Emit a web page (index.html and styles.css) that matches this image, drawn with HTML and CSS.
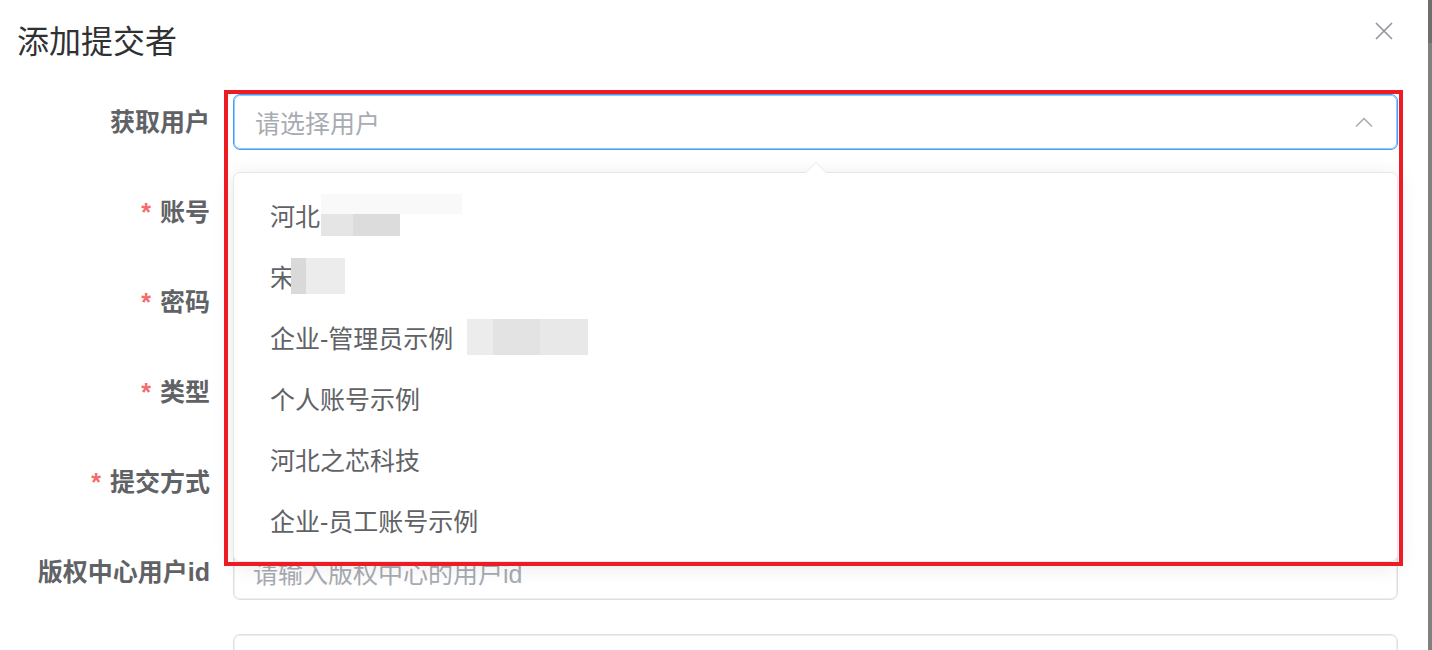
FILE: index.html
```html
<!DOCTYPE html>
<html>
<head>
  <title>添加提交者</title>
  <link rel="stylesheet" href="styles.css">
</head>
<body>
<div class="page">
  <div class="dialog">
    <div class="dialog-header">
      <span class="dialog-title">添加提交者</span>
      <svg class="close-icon" width="18" height="18" viewBox="0 0 18 18">
        <path d="M1 1 L17 17 M17 1 L1 17" stroke="#909399" stroke-width="1.6" fill="none"/>
      </svg>
    </div>

    <div class="form">
      <div class="form-row">
        <label class="form-label">获取用户</label>
        <div class="form-field">
          <div class="select is-focus">
            <span class="placeholder">请选择用户</span>
            <svg class="arrow-icon" width="18" height="10" viewBox="0 0 18 10">
              <path d="M1 9.5 L9 1.5 L17 9.5" stroke="#a8abb2" stroke-width="1.5" fill="none"/>
            </svg>
          </div>
        </div>
      </div>
      <div class="form-row">
        <label class="form-label"><span class="required">*</span>账号</label>
        <div class="form-field"><div class="input"></div></div>
      </div>
      <div class="form-row">
        <label class="form-label"><span class="required">*</span>密码</label>
        <div class="form-field"><div class="input"></div></div>
      </div>
      <div class="form-row">
        <label class="form-label"><span class="required">*</span>类型</label>
        <div class="form-field"><div class="input"></div></div>
      </div>
      <div class="form-row">
        <label class="form-label"><span class="required">*</span>提交方式</label>
        <div class="form-field"><div class="input"></div></div>
      </div>
      <div class="form-row">
        <label class="form-label">版权中心用户id</label>
        <div class="form-field"><div class="input"><span class="placeholder">请输入版权中心的用户id</span></div></div>
      </div>
      <div class="form-row">
        <label class="form-label"></label>
        <div class="form-field"><div class="input"></div></div>
      </div>
    </div>

    <!-- dropdown of the select -->
    <div class="dropdown">
      <ul class="dropdown-list">
        <li class="dropdown-item">河北<span class="blur blur-one"><span class="blur-top"></span><span class="blur-bottom"><i class="b1"></i><i class="b2"></i></span></span></li>
        <li class="dropdown-item">宋<span class="blur blur-two"><i class="b1"></i><i class="b2"></i></span></li>
        <li class="dropdown-item">企业-管理员示例<span class="blur blur-three"><i class="b1"></i><i class="b2"></i><i class="b3"></i></span></li>
        <li class="dropdown-item">个人账号示例</li>
        <li class="dropdown-item">河北之芯科技</li>
        <li class="dropdown-item">企业-员工账号示例</li>
      </ul>
    </div>

    <div class="highlight-box"></div>
  </div>
  <div class="scrollbar"></div>
</div>
</body>
</html>
```

FILE: styles.css
```css
html, body {
  margin: 0;
  height: 100%;
}

body {
  background-color: #fff;
  font-family: "Liberation Sans", "Noto Sans CJK SC", sans-serif;
  overflow: hidden;
}

.page {
  display: flex;
  height: 650px;
  overflow: hidden;
}

.dialog {
  flex: 1;
  position: relative;
}

.dialog-header {
  display: flex;
  justify-content: space-between;
  align-items: flex-start;
  height: 64px;
  box-sizing: border-box;
  padding: 20px 35px 0 17px;
}

.dialog-title {
  font-size: 32px;
  line-height: 44px;
  color: #303133;
}

.close-icon {
  margin-top: 2px;
}

.form {
  padding: 30px 30px 0 0;
}

.form-row {
  display: flex;
  height: 56px;
  margin-bottom: 34px;
}

.form-label {
  width: 233px;
  flex-shrink: 0;
  box-sizing: border-box;
  padding-right: 23px;
  text-align: right;
  font-size: 25px;
  font-weight: bold;
  line-height: 56px;
  color: #606266;
}

.required {
  color: #f56c6c;
  margin-right: 9px;
}

.form-field {
  flex: 1;
}

.select, .input {
  display: flex;
  align-items: center;
  height: 56px;
  box-sizing: border-box;
  border: 1px solid #dcdfe6;
  border-radius: 7px;
  box-shadow: inset 0 0 0 1px rgba(220, 223, 230, 0.5);
  font-size: 25px;
}

.select {
  justify-content: space-between;
  padding: 0 24px 0 21px;
}

.select.is-focus {
  border-color: #409eff;
  box-shadow: inset 0 0 0 1px rgba(64, 158, 255, 0.55);
}

.input {
  padding: 0 19px;
}

.placeholder {
  color: #a8abb2;
}

.arrow-icon {
  display: block;
}

/* dropdown */
.dropdown {
  position: absolute;
  top: 172px;
  left: 233px;
  right: 30px;
  background: #fff;
  border: 1px solid #e4e7ed;
  border-radius: 7px;
  box-shadow: 0 4px 21px 0 rgba(0, 0, 0, 0.1);
  z-index: 2;
}

.dropdown::before, .dropdown::after {
  content: "";
  position: absolute;
  left: 50%;
  margin-left: -11px;
  border-style: solid;
  border-color: transparent;
  border-width: 0 11px 11px;
}

.dropdown::before {
  top: -11px;
  border-bottom-color: #e4e7ed;
}

.dropdown::after {
  top: -10px;
  border-bottom-color: #fff;
}

.dropdown-list {
  list-style: none;
  margin: 0;
  padding: 11px 0;
}

.dropdown-item {
  display: flex;
  align-items: center;
  height: 61px;
  padding: 0 36px;
  font-size: 25px;
  color: #606266;
}

/* blurred names */
.blur {
  display: flex;
}

.blur i {
  display: block;
  height: 100%;
}

.blur-one {
  flex-direction: column;
  height: 42px;
  margin-left: 1px;
}

.blur-top {
  width: 141px;
  height: 20px;
  background: #f9f9f9;
}

.blur-bottom {
  display: flex;
  width: 79px;
  height: 22px;
}

.blur-one .b1 { width: 32px; background: #e5e5e5; }
.blur-one .b2 { width: 47px; background: #dcdcdc; }

.blur-two {
  height: 36px;
  margin-left: -4px;
}

.blur-two .b1 { width: 15px; background: #d9d9d9; }
.blur-two .b2 { width: 39px; background: #ececec; }

.blur-three {
  height: 36px;
  margin-left: 14px;
}

.blur-three .b1 { width: 26px; background: #ececec; }
.blur-three .b2 { width: 47px; background: #e3e3e3; }
.blur-three .b3 { width: 48px; background: #e8e8e8; }

/* annotation box */
.highlight-box {
  position: absolute;
  left: 224px;
  top: 90px;
  width: 1179px;
  height: 476px;
  box-sizing: border-box;
  border: 4px solid #ed1c24;
  z-index: 3;
  pointer-events: none;
}

.scrollbar {
  width: 4px;
  flex-shrink: 0;
  background: #808080;
  border-top: 43px solid #6e6e6e;
}
```
